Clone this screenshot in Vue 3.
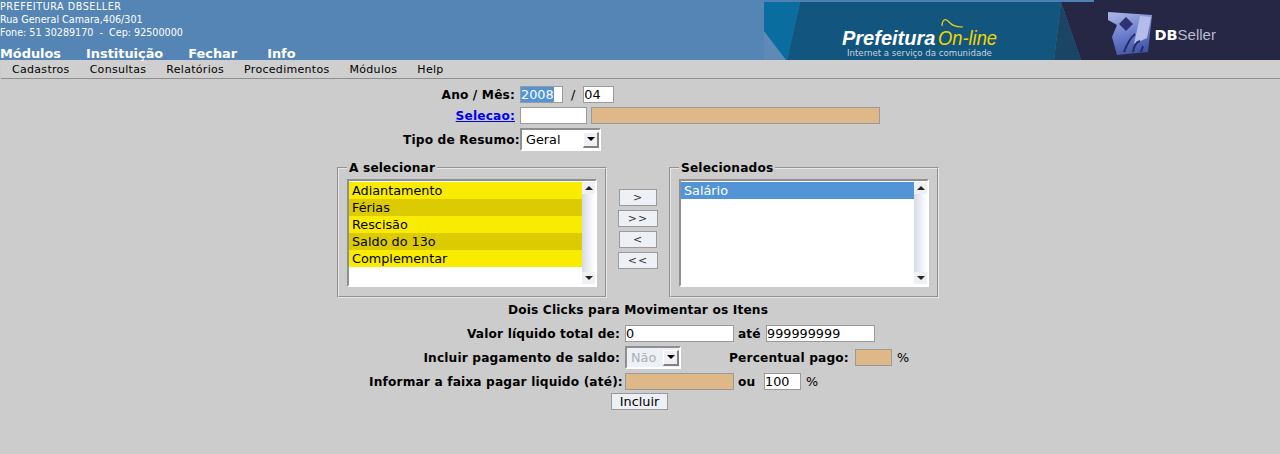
<template>
  <div class="page">
    <header class="top">
      <div class="top-left">
        <div class="company">
          <div class="company-name">PREFEITURA DBSELLER</div>
          <div>Rua General Camara,406/301</div>
          <div>Fone: 51 30289170 &nbsp;-&nbsp; Cep: 92500000</div>
        </div>
        <nav class="main-nav">
          <span v-for="item in mainNav" :key="item">{{ item }}</span>
        </nav>
      </div>
      <svg class="banner" width="516" height="60" viewBox="0 0 516 60">
        <defs>
          <linearGradient id="logoFill" x1="0.2" y1="0" x2="0.5" y2="1">
            <stop offset="0" stop-color="#aab4e4" />
            <stop offset="0.55" stop-color="#6a7bcb" />
            <stop offset="1" stop-color="#4455a6" />
          </linearGradient>
          <filter id="soft"><feGaussianBlur stdDeviation="0.6" /></filter>
        </defs>
        <rect width="516" height="60" fill="#5f8ab8" />
        <rect width="330" height="2" fill="#4d81b5" />
        <polygon points="0,2 36,2 23,60 22,60 0,31" fill="#0a6d9f" />
        <polygon points="36,2 297,2 290,60 23,60" fill="#12557e" />
        <polygon points="297,2 290,60 317,60" fill="#1a4564" />
        <polygon points="297,2 330,2 330,0 516,0 516,60 317,60" fill="#262645" />
        <text x="78" y="45" class="b-pref">Prefeitura</text>
        <text x="174" y="45" class="b-online" textLength="59" lengthAdjust="spacingAndGlyphs">On-line</text>
        <path d="M178 26 C178 20 181 18 184 21 C187 24 189 27 199 27" fill="none" stroke="#f2d500" stroke-width="1.2" />
        <text x="83" y="56" class="b-sub">Internet a serviço da comunidade</text>
        <g filter="url(#soft)">
          <polygon points="344,12 388,15 384,52 353,55 348,37 353,25 344,20" fill="url(#logoFill)" />
          <polygon points="362,17 369,24 362,31 355,24" fill="#2d3272" />
          <polygon points="376,16 387,17 383,38 370,44" fill="#b4bdea" />
          <path d="M360 52 C363 44 366 38 371 34 M369 52 C370 46 372 42 376 41 M377 52 L379 46" stroke="#262c66" stroke-width="2" fill="none" />
        </g>
        <text x="390.5" y="40"><tspan class="b-db">DB</tspan><tspan class="b-seller">Seller</tspan></text>
      </svg>
    </header>

    <nav class="menu-bar">
      <span v-for="item in menuItems" :key="item">{{ item }}</span>
    </nav>

    <main class="content">
      <div class="top-form">
        <label class="spaced">Ano / Mês:</label>
        <div class="field-row">
          <div class="field w-ano"><span class="picked">2008</span></div>
          <span class="slash">/</span>
          <div class="field w-mes">04</div>
        </div>
        <label class="spaced"><a href="#" class="link">Selecao:</a></label>
        <div class="field-row">
          <div class="field w-sel"></div>
          <div class="field locked w-desc"></div>
        </div>
        <label>Tipo de Resumo:</label>
        <div class="field-row">
          <div class="select w-tipo">
            <span class="select-text">Geral</span>
            <span class="select-btn"><i></i></span>
          </div>
        </div>
      </div>

      <div class="picker">
        <fieldset class="group">
          <legend>A selecionar</legend>
          <div class="listbox">
            <div class="options">
              <div v-for="(opt, i) in available" :key="opt" class="option" :class="i % 2 ? 'dark' : 'light'">{{ opt }}</div>
            </div>
            <div class="scroll">
              <span class="arrow"><i class="up"></i></span>
              <span class="arrow"><i class="down"></i></span>
            </div>
          </div>
        </fieldset>

        <div class="moves">
          <button v-for="b in moveButtons" :key="b.label" class="move" :class="{ wide: b.wide }">{{ b.label }}</button>
        </div>

        <fieldset class="group">
          <legend>Selecionados</legend>
          <div class="listbox">
            <div class="options">
              <div class="option picked-row">Salário</div>
            </div>
            <div class="scroll">
              <span class="arrow"><i class="up"></i></span>
              <span class="arrow"><i class="down"></i></span>
            </div>
          </div>
        </fieldset>
      </div>

      <div class="hint">Dois Clicks para Movimentar os Itens</div>

      <div class="bottom-form">
        <label>Valor líquido total de:</label>
        <div class="field-row">
          <div class="field w-val">0</div>
          <b class="w-ate">até</b>
          <div class="field w-val">999999999</div>
        </div>
        <label>Incluir pagamento de saldo:</label>
        <div class="field-row">
          <div class="select w-nao off">
            <span class="select-text">Não</span>
            <span class="select-btn"><i></i></span>
          </div>
          <b class="pct-label">Percentual pago:</b>
          <div class="field locked w-pct"></div>
          <span class="pct-sign">%</span>
        </div>
        <label>Informar a faixa pagar liquido (até):</label>
        <div class="field-row">
          <div class="field locked w-val"></div>
          <b class="w-ou">ou</b>
          <div class="field w-cem">100</div>
          <span class="pct-sign">%</span>
        </div>
      </div>

      <button class="submit">Incluir</button>
    </main>
  </div>
</template>

<script setup>
const mainNav = ['Módulos', 'Instituição', 'Fechar', 'Info']
const menuItems = ['Cadastros', 'Consultas', 'Relatórios', 'Procedimentos', 'Módulos', 'Help']
const available = ['Adiantamento', 'Férias', 'Rescisão', 'Saldo do 13o', 'Complementar']
const moveButtons = [
  { label: '>', wide: false },
  { label: '>>', wide: true },
  { label: '<', wide: false },
  { label: '<<', wide: true },
]
</script>

<style>
html, body { margin: 0; background: #cccccc; }
</style>

<style scoped>
.page {
  height: 454px;
  overflow: hidden;
  background: #cccccc;
  font-family: "DejaVu Sans", sans-serif;
  font-size: 12.8px;
  color: #000;
}

/* header */
.top {
  display: flex;
  justify-content: space-between;
  height: 60px;
  background: #5585b5;
  color: #fff;
}
.company {
  font-size: 9.6px;
  line-height: 13px;
}
.company-name { letter-spacing: 0.55px; }
.main-nav {
  display: flex;
  gap: 25px;
  margin-top: 8px;
  font-size: 12.9px;
  font-weight: bold;
  line-height: 13px;
}
.main-nav span:last-child { margin-left: 5px; }
.banner { display: block; }
.b-pref { font: italic bold 20px "Liberation Sans", sans-serif; fill: #fff; }
.b-online { font: italic 20px "Liberation Sans", sans-serif; fill: #f2d500; }
.b-sub { font: 8.6px "DejaVu Sans", sans-serif; fill: #c6d4df; }
.b-db { font: bold 14.5px "DejaVu Sans", sans-serif; fill: #fff; }
.b-seller { font: 15px "Liberation Sans", sans-serif; fill: #bcbccd; }

.menu-bar {
  display: flex;
  gap: 20px;
  height: 18px;
  margin-left: 1px;
  padding-left: 11px;
  background: #cfcfcf;
  border-bottom: 1px solid #8f8f8f;
  font-size: 11px;
  letter-spacing: 0.3px;
  line-height: 19px;
}

/* form */
.content {
  display: flex;
  flex-direction: column;
  align-items: flex-start;
}
label, b, legend, .hint {
  font-weight: bold;
  font-size: 12.2px;
  letter-spacing: 0.15px;
}
label { text-align: right; white-space: nowrap; }
label.spaced { padding-right: 4px; }
.link { color: #0000ee; }
.top-form, .bottom-form {
  display: grid;
  align-items: center;
}
.top-form {
  grid-template-columns: 116px auto;
  grid-template-rows: 21px 21px 27px;
  column-gap: 1px;
  margin: 5px 0 0 403px;
}
.field-row {
  display: flex;
  align-items: center;
  gap: 4px;
}
.field {
  box-sizing: border-box;
  height: 17px;
  background: #fff;
  border: 1px solid #9a9a9a;
  line-height: 15px;
}
.locked { background: #deb887; }
.picked { background: #5294d6; color: #fff; }
.slash { margin: 0 4px; }
.w-ano { width: 43px; }
.w-mes { width: 31px; }
.w-sel { width: 67px; }
.w-desc { width: 289px; }
.w-val { width: 109px; }
.w-pct { width: 37px; }
.w-cem { width: 37px; margin-left: 4px; }
.w-ate { width: 24px; }
.w-ou { width: 18px; }
.pct-sign { margin-left: 1px; }

.select {
  display: flex;
  box-sizing: border-box;
  height: 23px;
  background: #fff;
  border: 2px solid;
  border-color: #8f8f8f #fff #fff #8f8f8f;
}
.w-tipo { width: 81px; }
.w-nao { width: 56px; }
.select-text { flex: 1; padding-left: 4px; line-height: 19px; }
.off { background: #edf0f4; }
.off .select-text { color: #a9b0b8; }
.select-btn {
  display: flex;
  align-items: center;
  justify-content: center;
  align-self: center;
  box-sizing: border-box;
  width: 16px;
  height: 16px;
  background: #eef0f4;
  border: solid;
  border-width: 1px 2px 2px 1px;
  border-color: #fff #808080 #808080 #fff;
}
.select-btn i {
  border: 4px solid transparent;
  border-top-color: #000;
  border-bottom: 0;
}

/* lists */
.picker {
  display: flex;
  align-items: flex-start;
  margin: 7px 0 0 337px;
}
.group {
  box-sizing: border-box;
  width: 270px;
  height: 138px;
  margin: 0;
  padding: 4px 8px 0;
  border: 2px groove #e6e6e6;
}
.group legend {
  padding: 1px 2px 0;
  line-height: 14px;
}
.listbox {
  display: flex;
  box-sizing: border-box;
  width: 250px;
  height: 108px;
  background: #fff;
  border: 2px solid;
  border-color: #8f8f8f #fff #fff #8f8f8f;
}
.options { flex: 1; padding-top: 1px; }
.option {
  height: 17px;
  padding-left: 3px;
  line-height: 17px;
}
.light { background: #f9ec00; }
.dark { background: #dccb00; }
.picked-row { background: #5294d6; color: #fff; }
.scroll {
  display: flex;
  flex-direction: column;
  justify-content: space-between;
  width: 13px;
  margin: 1px 0;
  background: linear-gradient(to right, #d5dae6, #f4f6fb 70%, #fff);
}
.arrow {
  display: flex;
  align-items: center;
  justify-content: center;
  height: 12px;
  background: #eef0f4;
}
.arrow i { border: 4px solid transparent; }
.arrow .up { border-top: 0; border-bottom-color: #222; }
.arrow .down { border-bottom: 0; border-top-color: #222; }

.moves {
  display: flex;
  flex-direction: column;
  align-items: center;
  gap: 4px;
  width: 62px;
  padding-top: 29px;
}
button {
  box-sizing: border-box;
  padding: 0;
  background: #edf0f4;
  border: 1px solid #9a9a9a;
  font-family: "DejaVu Sans", sans-serif;
  color: #000;
}
.move {
  width: 38px;
  height: 17px;
  font-size: 11px;
  letter-spacing: 1px;
  line-height: 13px;
  color: #333;
}
.move.wide { width: 40px; }

.hint {
  width: 1276px;
  margin-top: 5px;
  text-align: center;
  line-height: 15px;
}

.bottom-form {
  grid-template-columns: 251px auto;
  grid-template-rows: 25px 23px 25px;
  column-gap: 5px;
  margin: 3px 0 0 369px;
}
.pct-label { width: 122px; margin-left: 44px; white-space: nowrap; }
.submit {
  width: 57px;
  height: 17px;
  margin: -1px 0 0 611px;
  font-size: 12.8px;
  line-height: 15px;
}
</style>
